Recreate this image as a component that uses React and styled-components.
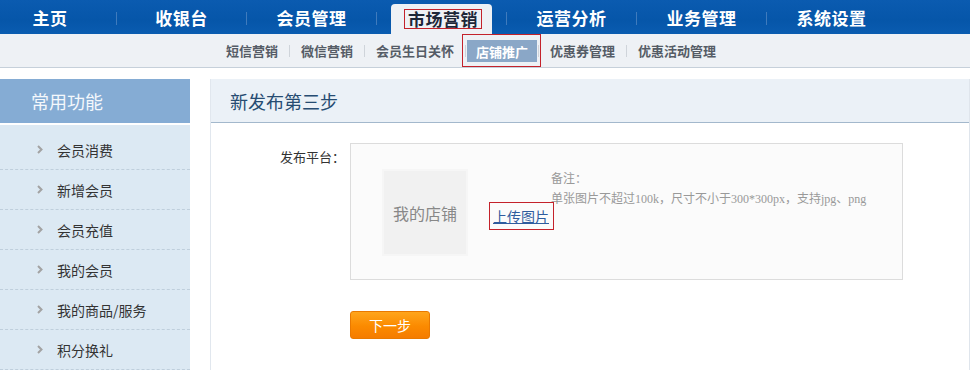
import styled, { createGlobalStyle } from "styled-components";

const GlobalStyle = createGlobalStyle`
  html, body {
    margin: 0;
    padding: 0;
    background: #fff;
  }
  body {
    width: 970px;
    font-family: "Noto Sans CJK SC", "Liberation Sans", sans-serif;
    color: #333;
  }
`;

const TopNav = styled.div`
  display: flex;
  align-items: stretch;
  height: 34px;
  background: linear-gradient(to bottom, #0b5bb0, #0656a9 60%, #0a5cb0);
  overflow: hidden;
`;

const NavCell = styled.div`
  display: flex;
  align-items: flex-end;
  justify-content: center;
  width: 129px;
  flex: none;
  box-sizing: border-box;

  &:first-child {
    width: 116px;
    padding-right: 16px;
  }
`;

const NavLabel = styled.div`
  display: flex;
  align-items: center;
  height: 34px;
  font-size: 17px;
  font-weight: bold;
  color: #fff;
  letter-spacing: 0.5px;
`;

const ActiveTab = styled.div`
  display: flex;
  align-items: center;
  height: 30px;
  padding: 0 10px 0 13px;
  background: #eef1f5;
  border-radius: 4px 4px 0 0;
`;

const RedFrame = styled.span`
  display: inline-flex;
  align-items: center;
  border: 1px solid #c4222b;
  padding: ${(p) => p.$pad || "0 3px"};
  line-height: 18px;
`;

const ActiveLabel = styled.span`
  font-size: 17px;
  font-weight: bold;
  color: #1d2738;
  letter-spacing: 0.5px;
`;

const NavSep = styled.div`
  flex: none;
  width: 1px;
  height: 13px;
  margin-top: 12px;
  background: #3f7bbd;
`;

const SubNav = styled.div`
  display: flex;
  align-items: center;
  height: 33px;
  padding-left: 217px;
  background: #eef1f5;
  border-bottom: 1px solid #c6d0da;
`;

const SubLink = styled.div`
  padding: 0 9px;
  font-size: 13px;
  font-weight: bold;
  color: #555c66;
  white-space: nowrap;
`;

const SubActive = styled.div`
  display: flex;
  align-items: stretch;
  height: 33px;
  margin: 0 -5px 0 -6px;
  box-sizing: border-box;
  border: 1px solid #c4222b;
  padding: 5px 3px 4px 4px;
`;

const SubActiveInner = styled.div`
  display: flex;
  align-items: center;
  padding: 0 9px;
  background: #8aa7c7;
  font-size: 13px;
  font-weight: bold;
  color: #fff;
`;

const SubSep = styled.div`
  flex: none;
  width: 1px;
  height: 12px;
  margin: 0 2px;
  background: #cfd4da;
`;

const Body = styled.div`
  display: flex;
  align-items: flex-start;
  margin-top: 11px;
`;

const Sidebar = styled.div`
  width: 190px;
  flex: none;
`;

const SideHeader = styled.div`
  height: 44px;
  display: flex;
  align-items: center;
  padding-left: 31px;
  background: #85acd4;
  color: #f4f8fc;
  font-size: 18px;
`;

const SideList = styled.div`
  margin-top: 2px;
  padding-top: 5px;
  background: #dce9f3;
`;

const SideItem = styled.div`
  display: flex;
  align-items: center;
  gap: 14px;
  height: 39px;
  padding-left: 37px;
  border-bottom: 1px dashed #bfcfdc;
  font-size: 14px;
  color: #333;
`;

const Main = styled.div`
  flex: 1;
  margin-left: 20px;
  min-height: 291px;
  border-left: 1px solid #e1e7ee;
  border-right: 1px solid #dfe5ec;
`;

const MainHeader = styled.div`
  height: 43px;
  display: flex;
  align-items: center;
  padding-left: 19px;
  background: #ebf1f7;
  border-bottom: 1px solid #a3b8cc;
  font-size: 18px;
  color: #264c72;
`;

const Form = styled.div`
  padding-top: 20px;
`;

const FormRow = styled.div`
  display: flex;
  align-items: flex-start;
`;

const Label = styled.div`
  width: 134px;
  flex: none;
  margin-top: 4px;
  margin-right: 5px;
  text-align: right;
  font-size: 13px;
  line-height: 20px;
  color: #333;
`;

const UploadBox = styled.div`
  display: flex;
  align-items: flex-start;
  width: 553px;
  height: 137px;
  box-sizing: border-box;
  padding: 25px 0 0 31px;
  background: #fbfbfb;
  border: 1px solid #dcdcdc;
`;

const Placeholder = styled.div`
  display: flex;
  align-items: center;
  justify-content: center;
  width: 86px;
  height: 87px;
  box-sizing: border-box;
  background: #f1f1f1;
  border: 2px solid #f6f6f6;
  font-size: 16px;
  color: #888;
`;

const UploadLink = styled.a`
  display: block;
  margin: 33px -3px 0 21px;
  font-size: 14px;
  color: #2f5c9e;
  cursor: pointer;
`;

const LinkText = styled.span`
  text-decoration: underline;
`;

const Note = styled.div`
  font-family: "Liberation Serif", "Noto Sans CJK SC", serif;
  font-size: 12px;
  line-height: 20px;
  color: #999;
`;

const ButtonRow = styled.div`
  padding: 31px 0 0 139px;
`;

const NextButton = styled.button`
  width: 80px;
  height: 28px;
  border: 1px solid #e97900;
  border-radius: 3px;
  background: linear-gradient(to bottom, #ffa51c, #fb8a00 55%, #f57c00);
  color: #fff;
  font-family: "Noto Sans CJK SC", sans-serif;
  font-size: 14px;
  cursor: pointer;
`;

const Chevron = () => (
  <svg width="6" height="9" viewBox="0 0 6 9">
    <polyline points="1,1 4.5,4.5 1,8" fill="none" stroke="#a3a3a3" strokeWidth="2" />
  </svg>
);

const NAV = ["主页", "收银台", "会员管理", "市场营销", "运营分析", "业务管理", "系统设置"];
const SUB = ["短信营销", "微信营销", "会员生日关怀", "店铺推广", "优惠券管理", "优惠活动管理"];
const SIDE = ["会员消费", "新增会员", "会员充值", "我的会员", "我的商品/服务", "积分换礼"];

export default function App() {
  return (
    <>
      <GlobalStyle />
      <TopNav>
        {NAV.map((name, i) => (
          <NavGroup key={name} first={i === 0}>
            <NavCell>
              {name === "市场营销" ? (
                <ActiveTab>
                  <RedFrame>
                    <ActiveLabel>{name}</ActiveLabel>
                  </RedFrame>
                </ActiveTab>
              ) : (
                <NavLabel>{name}</NavLabel>
              )}
            </NavCell>
          </NavGroup>
        ))}
      </TopNav>
      <SubNav>
        {SUB.map((name, i) => (
          <SubGroup key={name} first={i === 0}>
            {name === "店铺推广" ? (
              <SubActive>
                <SubActiveInner>{name}</SubActiveInner>
              </SubActive>
            ) : (
              <SubLink>{name}</SubLink>
            )}
          </SubGroup>
        ))}
      </SubNav>
      <Body>
        <Sidebar>
          <SideHeader>常用功能</SideHeader>
          <SideList>
            {SIDE.map((name) => (
              <SideItem key={name}>
                <Chevron />
                {name}
              </SideItem>
            ))}
          </SideList>
        </Sidebar>
        <Main>
          <MainHeader>新发布第三步</MainHeader>
          <Form>
            <FormRow>
              <Label>发布平台：</Label>
              <UploadBox>
                <Placeholder>我的店铺</Placeholder>
                <UploadLink>
                  <RedFrame $pad="4px 4px 4px 3px">
                    <LinkText>上传图片</LinkText>
                  </RedFrame>
                </UploadLink>
                <Note>
                  备注：
                  <br />
                  单张图片不超过100k，尺寸不小于300*300px，支持jpg、png
                </Note>
              </UploadBox>
            </FormRow>
            <ButtonRow>
              <NextButton>下一步</NextButton>
            </ButtonRow>
          </Form>
        </Main>
      </Body>
    </>
  );
}

function NavGroup({ first, children }) {
  return (
    <>
      {!first && <NavSep />}
      {children}
    </>
  );
}

function SubGroup({ first, children }) {
  return (
    <>
      {!first && <SubSep />}
      {children}
    </>
  );
}
